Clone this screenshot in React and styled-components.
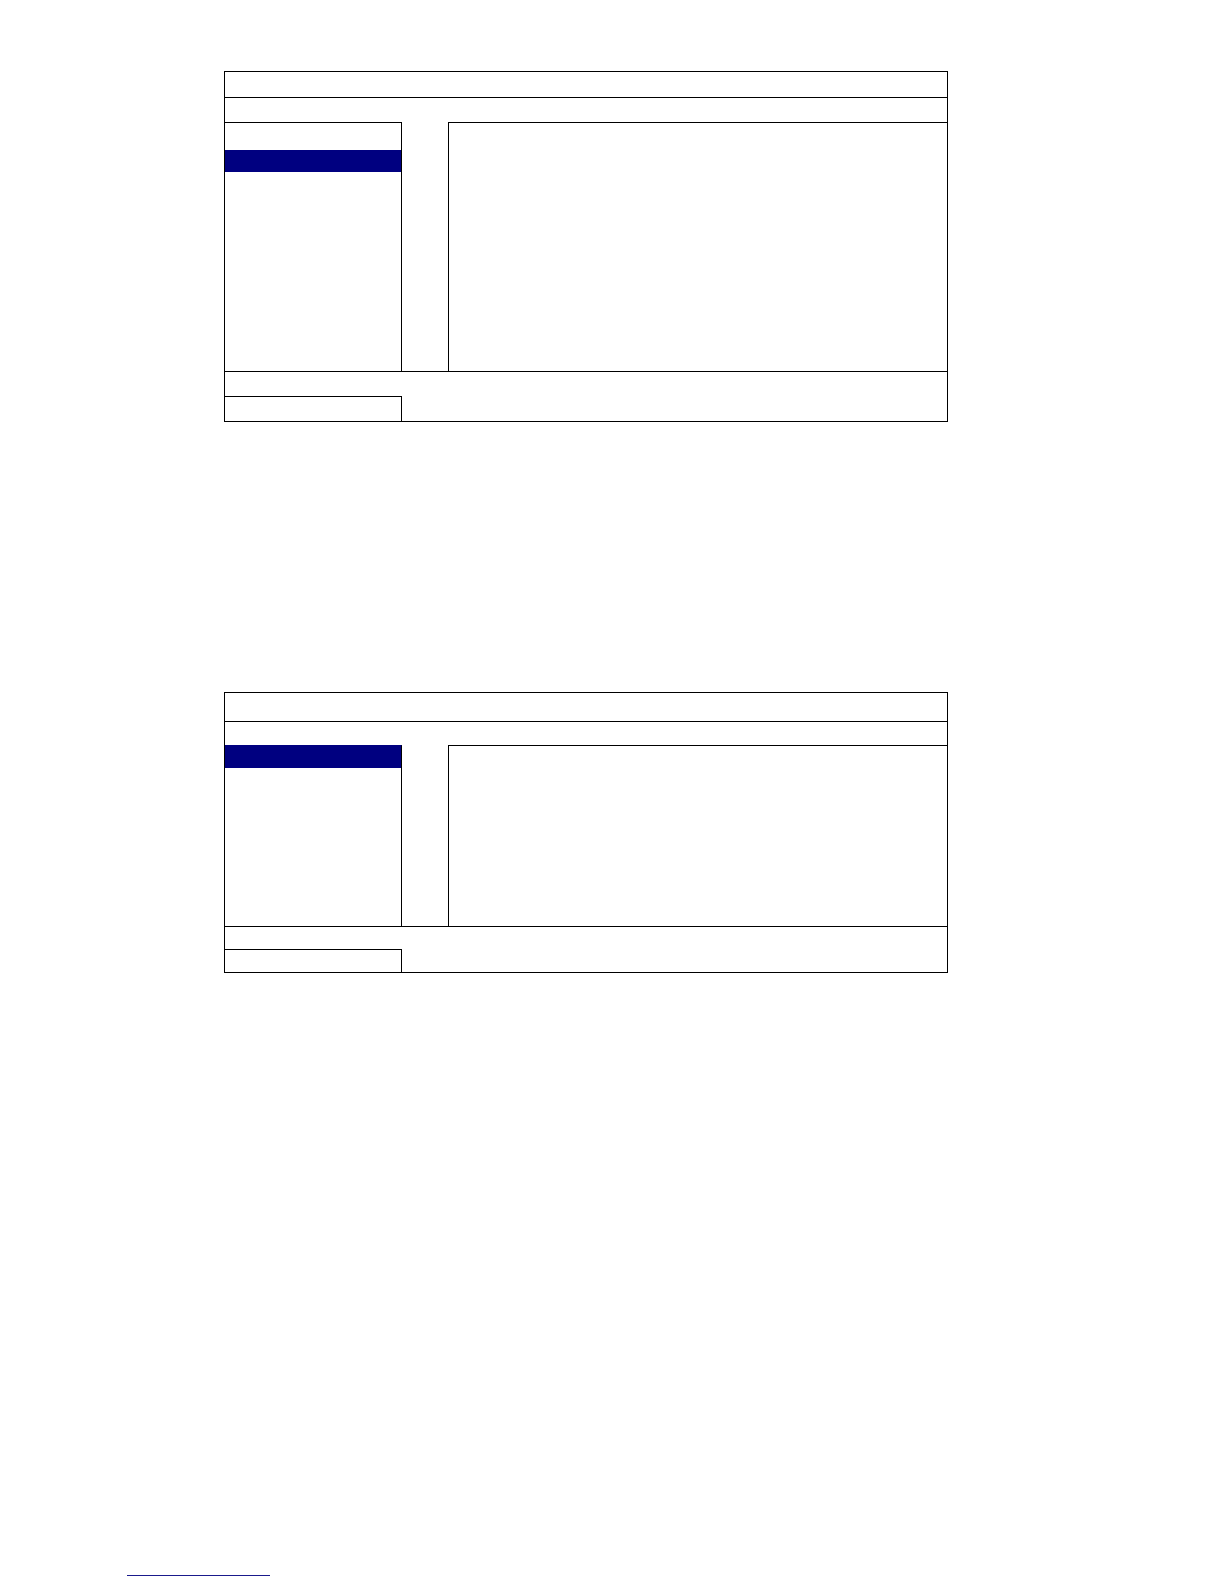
import React from "react";
import styled, { createGlobalStyle } from "styled-components";

const GlobalStyle = createGlobalStyle`
  html, body {
    margin: 0;
    padding: 0;
    background: #fff;
    font-family: "Liberation Sans", Arial, sans-serif;
  }
  * {
    box-sizing: border-box;
  }
`;

const Page = styled.div`
  width: 1224px;
  min-height: 1584px;
  padding-top: 71px;
  display: flex;
  flex-direction: column;
`;

const Frame = styled.div`
  width: 724px;
  margin-left: 224px;
  margin-top: ${(p) => p.$gap || 0}px;
  border: 1px solid #000;
  display: flex;
  flex-direction: column;
`;

const TitleRow = styled.div`
  height: ${(p) => p.$h}px;
  border-bottom: 1px solid #000;
`;

const SubRow = styled.div`
  height: ${(p) => p.$h}px;
`;

const ContentRow = styled.div`
  height: ${(p) => p.$h}px;
  display: flex;
  border-bottom: 1px solid #000;
`;

const Sidebar = styled.div`
  width: 177px;
  border-top: 1px solid ${(p) => (p.$offset ? "#000" : "#000080")};
  border-right: 1px solid #000;
  padding-top: ${(p) => p.$offset || 0}px;
  display: flex;
  flex-direction: column;
`;

const MenuItem = styled.div`
  height: 22px;
  background: ${(p) => (p.$active ? "#000080" : "transparent")};
`;

const Panel = styled.div`
  flex: 1;
  margin-left: 46px;
  border-top: 1px solid #000;
  border-left: 1px solid #000;
`;

const FooterRow = styled.div`
  height: ${(p) => p.$h}px;
`;

const BottomBox = styled.div`
  width: 177px;
  height: ${(p) => p.$h}px;
  border-top: 1px solid #000;
  border-right: 1px solid #000;
`;

const FootLink = styled.a`
  display: block;
  width: 143px;
  height: 1px;
  margin-left: 127px;
  margin-top: 602px;
  background: #1a1a8c;
`;

const MenuScreen = ({ gap, title, sub, content, offset, footer, bottom }) => (
  <Frame $gap={gap}>
    <TitleRow $h={title} />
    <SubRow $h={sub} />
    <ContentRow $h={content}>
      <Sidebar $offset={offset}>
        <MenuItem $active />
      </Sidebar>
      <Panel />
    </ContentRow>
    <FooterRow $h={footer} />
    <BottomBox $h={bottom} />
  </Frame>
);

const App = () => (
  <>
    <GlobalStyle />
    <Page>
      <MenuScreen title={26} sub={24} content={250} offset={27} footer={24} bottom={25} />
      <MenuScreen gap={270} title={29} sub={23} content={182} offset={0} footer={22} bottom={23} />
      <FootLink />
    </Page>
  </>
);

export default App;
